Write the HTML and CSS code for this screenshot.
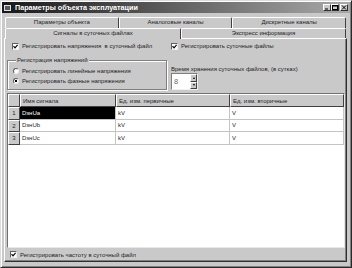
FILE: index.html
```html
<!DOCTYPE html>
<html lang="ru">
<head>
    <meta charset="UTF-8">
    <title>Параметры объекта эксплуатации</title>
    <link rel="stylesheet" href="styles.css">
</head>
<body>
    <div class="window">
        <div class="titlebar">
            <span class="app-icon"></span>
            <span class="title">Параметры объекта эксплуатации</span>
            <div class="caption-btns">
                <span class="cbtn"><svg width="6" height="5" viewBox="0 0 6 5"><path d="M1 4h3" stroke="#000" stroke-width="1"/></svg></span>
                <span class="cbtn"><svg width="6" height="5" viewBox="0 0 6 5"><rect x="0.5" y="0.5" width="5" height="4" fill="none" stroke="#000"/><path d="M0 1h6" stroke="#000"/></svg></span>
                <span class="cbtn close"><svg width="6" height="5" viewBox="0 0 6 5"><path d="M1 0.5l4 4M5 0.5l-4 4" stroke="#000" stroke-width="1"/></svg></span>
            </div>
        </div>

        <div class="tabs">
            <div class="tab-row">
                <div class="tab">Параметры объекта</div>
                <div class="tab">Аналоговые каналы</div>
                <div class="tab">Дискретные каналы</div>
            </div>
            <div class="tab-row front">
                <div class="tab active">Сигналы в суточных файлах</div>
                <div class="tab">Экспресс информация</div>
            </div>
        </div>

        <div class="panel">
            <div class="opt-row">
                <label class="check first"><span class="box"><svg width="5" height="5" viewBox="0 0 5 5"><path d="M0.5 2.2L2 3.8L4.6 0.8" fill="none" stroke="#000" stroke-width="1.2"/></svg></span>Регистрировать напряжения  в суточный файл</label>
                <label class="check"><span class="box"><svg width="5" height="5" viewBox="0 0 5 5"><path d="M0.5 2.2L2 3.8L4.6 0.8" fill="none" stroke="#000" stroke-width="1.2"/></svg></span>Регистрировать суточные файлы</label>
            </div>

            <div class="mid-row">
                <fieldset class="group">
                    <legend>Регистрация напряжений</legend>
                    <div class="radio-row"><span class="radio"></span>Регистрировать линейные напряжения</div>
                    <div class="radio-row"><span class="radio on"></span>Регистрировать фазные напряжения</div>
                </fieldset>
                <div class="storage">
                    <div class="storage-label">Время хранения суточных файлов, (в сутках)</div>
                    <div class="spin">
                        <span class="spin-val">8</span>
                        <span class="spin-btns">
                            <span class="sbtn"><span class="arr up"></span></span>
                            <span class="sbtn"><span class="arr down"></span></span>
                        </span>
                    </div>
                </div>
            </div>

            <div class="grid">
                <table>
                    <colgroup>
                        <col class="c0"><col class="c1"><col class="c2"><col class="c3">
                    </colgroup>
                    <tr>
                        <th></th>
                        <th>Имя сигнала</th>
                        <th>Ед. изм. первичные</th>
                        <th>Ед. изм. вторичные</th>
                    </tr>
                    <tr>
                        <td class="rh">1</td>
                        <td class="sel">DзнUa</td>
                        <td>kV</td>
                        <td>V</td>
                    </tr>
                    <tr>
                        <td class="rh">2</td>
                        <td>DзнUb</td>
                        <td>kV</td>
                        <td>V</td>
                    </tr>
                    <tr>
                        <td class="rh">3</td>
                        <td>DзнUc</td>
                        <td>kV</td>
                        <td>V</td>
                    </tr>
                </table>
            </div>

            <div class="bottom-row">
                <label class="check"><span class="box"><svg width="5" height="5" viewBox="0 0 5 5"><path d="M0.5 2.2L2 3.8L4.6 0.8" fill="none" stroke="#000" stroke-width="1.2"/></svg></span>Регистрировать частоту в суточный файл</label>
            </div>
        </div>
    </div>
</body>
</html>
```

FILE: styles.css
```css
* {
    box-sizing: border-box;
}
body {
    margin: 0;
    font-family: 'Liberation Sans', Arial, sans-serif;
    font-size: 6px;
    color: #1e1e1e;
    background: #c9c9c9;
}
.window {
    width: 352px;
    height: 268px;
    display: flex;
    flex-direction: column;
    padding: 1px;
    background: #c9c9c9;
    border: 1px solid;
    border-color: #dcdcdc #2a2a2a #2a2a2a #dcdcdc;
    box-shadow: inset 1px 1px #fff, inset -1px -1px #808080;
}
.titlebar {
    height: 11px;
    display: flex;
    align-items: center;
    padding: 0 2px;
    background: linear-gradient(90deg, #181818, #a9a9a9);
    color: #fff;
}
.app-icon {
    width: 7px;
    height: 6px;
    margin-right: 4px;
    border: 1px solid #e0e0e0;
    background: #5a5a5a;
}
.title {
    flex: 1;
    font-weight: bold;
    font-size: 7.2px;
    white-space: nowrap;
}
.caption-btns {
    display: flex;
}
.cbtn {
    width: 8px;
    height: 7px;
    display: flex;
    align-items: center;
    justify-content: center;
    background: #c9c9c9;
    border: 1px solid;
    border-color: #fff #303030 #303030 #fff;
}
.cbtn svg {
    display: block;
}
.cbtn.close {
    margin-left: 1px;
}

/* Tabs */
.tabs {
    margin: 4px 4px 0 3px;
}
.tab-row {
    display: flex;
    height: 11px;
}
.tab-row.front {
    height: 10px;
}
.tab {
    flex: 1;
    text-align: center;
    line-height: 9px;
    white-space: nowrap;
    border: 1px solid;
    border-bottom: none;
    border-color: #fff #404040 transparent #fff;
    border-radius: 2px 2px 0 0;
}
.tab.active {
    flex: 0 0 176px;
    height: 11px;
    position: relative;
    background: #c9c9c9;
}

/* Panel */
.panel {
    flex: 1;
    margin: 0 3px 4px 2px;
    display: flex;
    flex-direction: column;
    border: 1px solid;
    border-color: #fff #303030 #303030 #fff;
    box-shadow: inset -1px -1px #808080;
}
.opt-row {
    display: flex;
    height: 11px;
    padding-top: 3px;
}
.check {
    display: flex;
    align-items: center;
    gap: 3px;
    height: 8px;
    white-space: pre;
}
.check.first {
    width: 159px;
    margin-left: 7px;
}
.box {
    width: 7px;
    height: 7px;
    display: flex;
    align-items: center;
    justify-content: center;
    background: #fff;
    border: 1px solid;
    border-color: #606060 #f0f0f0 #f0f0f0 #606060;
}
.box svg {
    display: block;
}
.mid-row {
    display: flex;
    margin-top: 6px;
}
.group {
    width: 160px;
    margin: 0 0 0 2px;
    padding: 2px 0 2px 5px;
    border: 1px solid #808080;
    box-shadow: inset 1px 1px #fff, 1px 1px #fff;
}
.group legend {
    height: 8px;
    margin-left: 3px;
    padding: 0 1px;
    line-height: 8px;
    background: #c9c9c9;
}
.radio-row {
    height: 10px;
    display: flex;
    align-items: center;
    gap: 3px;
}
.radio {
    width: 6px;
    height: 6px;
    border-radius: 50%;
    background: #fff;
    border: 1px solid;
    border-color: #606060 #f0f0f0 #f0f0f0 #606060;
}
.radio.on {
    background: radial-gradient(circle, #000 0 1.2px, #fff 1.5px);
}
.storage {
    margin-left: 4px;
    padding-top: 10px;
}
.storage-label {
    line-height: 7px;
    white-space: nowrap;
}
.spin {
    width: 27px;
    height: 17px;
    display: flex;
    background: #fff;
    border: 1px solid;
    border-color: #808080 #f0f0f0 #f0f0f0 #808080;
}
.spin-val {
    flex: 1;
    padding: 3px 0 0 2px;
    font-size: 7.5px;
    color: #6a6a6a;
}
.spin-btns {
    width: 7px;
    display: flex;
    flex-direction: column;
}
.sbtn {
    flex: 1;
    display: flex;
    align-items: center;
    justify-content: center;
    background: #c9c9c9;
    border: 1px solid;
    border-color: #fff #404040 #404040 #fff;
}
.arr {
    width: 0;
    height: 0;
    border-left: 1.5px solid transparent;
    border-right: 1.5px solid transparent;
}
.arr.up {
    border-bottom: 2px solid #000;
}
.arr.down {
    border-top: 2px solid #000;
}

/* Signal grid */
.grid {
    flex: 1;
    margin: 3px 1px 0 2px;
    background: #fff;
    border: 1px solid;
    border-color: #707070 #e8e8e8 #e8e8e8 #707070;
}
.grid table {
    width: 336px;
    table-layout: fixed;
    border-collapse: separate;
    border-spacing: 0;
}
.c0 { width: 12px; }
.c1 { width: 96px; }
.c2 { width: 114px; }
.c3 { width: 114px; }
.grid th {
    height: 13px;
    padding: 0 2px;
    font-weight: normal;
    text-align: left;
    white-space: nowrap;
    background: #c9c9c9;
    border: 1px solid;
    border-color: #fff #404040 #404040 #fff;
}
.grid td {
    height: 12.5px;
    padding: 0 2px;
    white-space: nowrap;
    border-right: 1px solid #c4c4c4;
    border-bottom: 1px solid #c4c4c4;
}
.grid td.rh {
    text-align: center;
    background: #c9c9c9;
    border: 1px solid;
    border-color: #fff #404040 #404040 #fff;
}
.grid td.sel {
    background: #000;
    color: #fff;
}
.bottom-row {
    height: 13px;
    display: flex;
    align-items: center;
    padding-left: 5px;
}
```
